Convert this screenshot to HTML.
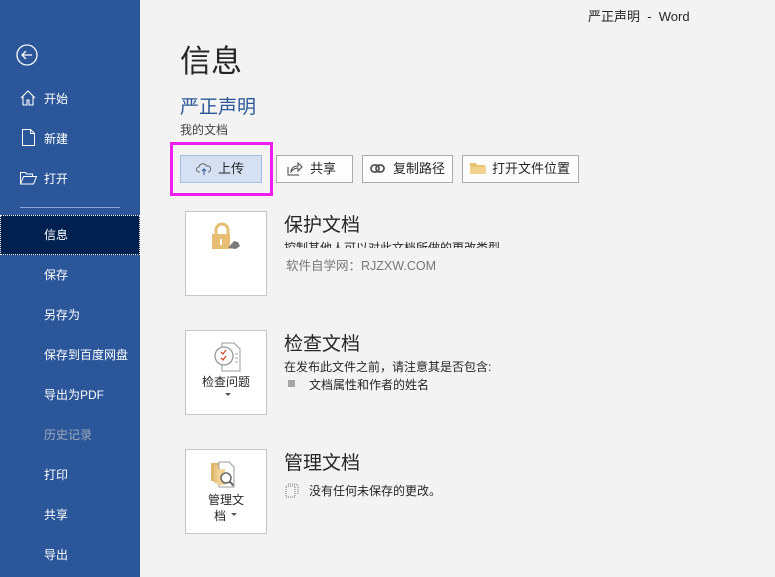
<!DOCTYPE html>
<html><head><meta charset="utf-8"><style>
*{margin:0;padding:0;box-sizing:border-box}
body{width:775px;height:577px;overflow:hidden;background:#f3f3f3;font-family:"Liberation Sans","Noto Sans CJK SC",sans-serif;position:relative;color:#262626}
.side{position:absolute;left:0;top:0;width:140px;height:577px;background:#2b579a}
.it{position:absolute;left:44px;color:#fff;font-size:12px;line-height:16px}
.ab{position:absolute}
.btn{position:absolute;top:155px;height:28px;border:1px solid #ababab;background:#fdfdfd;font-size:13px;line-height:26px;color:#262626}
.card{position:absolute;left:185px;width:82px;height:85px;background:#fff;border:1px solid #c6c6c6}
.t{position:absolute;left:284px;font-size:19px;color:#262626}
.d{position:absolute;font-size:12px;color:#262626}
</style></head><body>
<div class="side">
<svg class="ab" style="left:16px;top:44px" width="22" height="22" viewBox="0 0 22 22"><circle cx="11" cy="11" r="10" fill="none" stroke="#fff" stroke-width="1.3"/><path d="M6 11h10M10 7l-4 4 4 4" fill="none" stroke="#fff" stroke-width="1.3"/></svg>
<svg class="ab" style="left:20px;top:90px" width="16" height="16" viewBox="0 0 16 16"><path d="M1 8L8 1l7 7M3 6v9h4v-5h2v5h4V6" fill="none" stroke="#fff" stroke-width="1.1"/></svg>
<div class="it" style="top:91px">开始</div>
<svg class="ab" style="left:22px;top:129px" width="13" height="17" viewBox="0 0 13 17"><path d="M.5.5h8l4 4v12H.5z M8.5.5v4h4" fill="none" stroke="#fff"/></svg>
<div class="it" style="top:131px">新建</div>
<svg class="ab" style="left:20px;top:171px" width="17" height="14" viewBox="0 0 17 14"><path d="M.5 13V1.5h5l1 1.5h6v2.5M.5 13l3-7.5h13l-3 7.5z" fill="none" stroke="#fff"/></svg>
<div class="it" style="top:171px">打开</div>
<div class="ab" style="left:20px;top:207px;width:100px;height:1px;background:#8aa8d6"></div>
<div class="ab" style="left:0;top:215px;width:140px;height:40px;background:#002050;border:1px dotted #fff"></div>
<div class="it" style="top:227px">信息</div>
<div class="it" style="top:267px">保存</div>
<div class="it" style="top:307px">另存为</div>
<div class="it" style="top:347px">保存到百度网盘</div>
<div class="it" style="top:387px">导出为PDF</div>
<div class="it" style="top:427px;color:#a0a8b8">历史记录</div>
<div class="it" style="top:467px">打印</div>
<div class="it" style="top:507px">共享</div>
<div class="it" style="top:547px">导出</div>
</div>
<div class="ab" style="left:588px;top:6px;font-size:13px;color:#262626">严正声明 &nbsp;-&nbsp; Word</div>
<div class="ab" style="left:180px;top:36px;font-size:31px;color:#262626">信息</div>
<div class="ab" style="left:180px;top:92px;font-size:19px;color:#2b579a">严正声明</div>
<div class="ab" style="left:180px;top:121px;font-size:12px;color:#444">我的文档</div>
<div class="ab" style="left:170px;top:142px;width:103px;height:54px;border:3px solid #f01df0"></div>
<div class="btn" style="left:180px;width:82px;background:#d5e1f2;border-color:#a3bde3;padding-left:37px">上传</div>
<svg class="ab" style="left:196px;top:162px" width="16" height="14" viewBox="0 0 16 14"><path d="M4 10H3a2.5 2.5 0 010-5 4 4 0 017.5-1 3 3 0 012 6H12" fill="none" stroke="#666"/><path d="M8 13V7M6 9l2-2 2 2" fill="none" stroke="#2b579a"/></svg>
<div class="btn" style="left:276px;width:77px;padding-left:33px">共享</div>
<svg class="ab" style="left:287px;top:161px" width="16" height="15" viewBox="0 0 16 15"><path d="M1 6v8h11M4 11c0-4 3-6 7-6V2l4 4-4 4V7c-3 0-5 1-7 4z" fill="none" stroke="#444"/></svg>
<div class="btn" style="left:362px;width:91px;padding-left:30px">复制路径</div>
<svg class="ab" style="left:370px;top:164px" width="15" height="9" viewBox="0 0 15 9"><rect x="1" y="1" width="8" height="7" rx="3.5" fill="none" stroke="#555" stroke-width="1.8"/><rect x="6" y="1" width="8" height="7" rx="3.5" fill="none" stroke="#555" stroke-width="1.8"/></svg>
<div class="btn" style="left:462px;width:117px;padding-left:29px">打开文件位置</div>
<svg class="ab" style="left:470px;top:161px" width="16" height="14" viewBox="0 0 16 14"><path d="M0 2h6l1 2h8v9H0z" fill="#e8c172"/><path d="M0 6h16v7H0z" fill="#f3d28e"/></svg>
<div class="card" style="top:211px"></div>
<svg class="ab" style="left:210px;top:222px" width="32" height="30" viewBox="0 0 32 30"><path d="M6 12V8a6 6 0 0112 0v4" fill="none" stroke="#e6bd72" stroke-width="3"/><rect x="2" y="12" width="18" height="15" fill="#e6bd72"/><rect x="10" y="17" width="2" height="6" fill="#fff"/><path d="M18 26l6-7 4 1 2 4-4 3z" fill="#7a7a7a"/></svg>
<div class="t" style="top:210px">保护文档</div>
<div class="d" style="left:284px;top:239px;height:9px;overflow:hidden">控制其他人可以对此文档所做的更改类型。</div>
<div class="d" style="left:286px;top:255px;color:#777;font-size:12.5px">软件自学网：RJZXW.COM</div>
<div class="card" style="top:330px"></div>
<svg class="ab" style="left:210px;top:342px" width="32" height="30" viewBox="0 0 32 30"><path d="M12 1h12l6 6v22H12z" fill="#fff" stroke="#999"/><circle cx="14" cy="14" r="9" fill="#fff" stroke="#999" stroke-width="1.3"/><path d="M11 10l2 2 3-4M11 16l2 2 3-4" fill="none" stroke="#d2502c" stroke-width="1.3"/><path d="M25 12h3M25 16h3M25 20h3" stroke="#aaa"/></svg>
<div class="ab" style="left:202px;top:373px;font-size:12px">检查问题</div>
<div class="ab" style="left:225px;top:393px;border:3px solid transparent;border-top:3px solid #555"></div>
<div class="t" style="top:329px">检查文档</div>
<div class="d" style="left:284px;top:358px">在发布此文件之前，请注意其是否包含:</div>
<div class="ab" style="left:288px;top:380px;width:7px;height:7px;background:#a6a6a6"></div>
<div class="d" style="left:309px;top:376px">文档属性和作者的姓名</div>
<div class="card" style="top:449px"></div>
<svg class="ab" style="left:209px;top:461px" width="34" height="30" viewBox="0 0 34 30"><rect x="2" y="2" width="10" height="18" fill="#d9b56d"/><rect x="5" y="4" width="10" height="18" fill="#e8c682"/><path d="M10 1h10l5 5v20H10z" fill="#fff" stroke="#999"/><rect x="8" y="8" width="8" height="16" fill="#f2d394"/><circle cx="17" cy="17" r="5" fill="#fff" stroke="#666" stroke-width="1.5"/><path d="M20.5 20.5l4 4" stroke="#666" stroke-width="2"/></svg>
<div class="ab" style="left:208px;top:491px;font-size:12px">管理文</div>
<div class="ab" style="left:214px;top:507px;font-size:12px">档</div>
<div class="ab" style="left:231px;top:513px;border:3px solid transparent;border-top:3px solid #555"></div>
<div class="t" style="top:448px">管理文档</div>
<svg class="ab" style="left:285px;top:483px" width="14" height="15" viewBox="0 0 14 15"><path d="M1 3h9v11H1z M3 1h8l2 2v9" fill="none" stroke="#777" stroke-dasharray="1 1"/></svg>
<div class="d" style="left:309px;top:482px">没有任何未保存的更改。</div>
</body></html>
